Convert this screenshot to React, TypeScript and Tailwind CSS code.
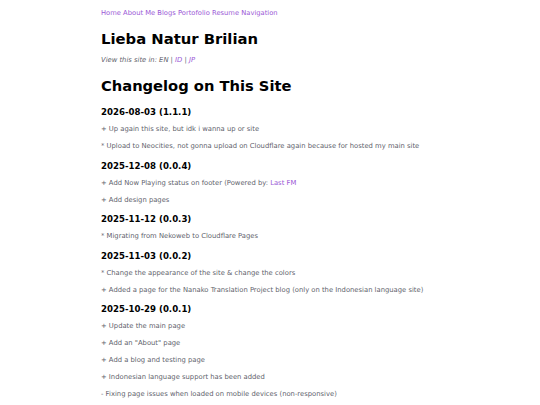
import React from 'react';

type Entry = { date: string; items: React.ReactNode[] };

const log: Entry[] = [
  {
    date: '2026-08-03 (1.1.1)',
    items: [
      '+ Up again this site, but idk i wanna up or site',
      '* Upload to Neocities, not gonna upload on Cloudflare again because for hosted my main site',
    ],
  },
  {
    date: '2025-12-08 (0.0.4)',
    items: [
      <>+ Add Now Playing status on footer (Powered by: <a className="text-[#9b59d6]">Last FM</a></>,
      '+ Add design pages',
    ],
  },
  {
    date: '2025-11-12 (0.0.3)',
    items: ['* Migrating from Nekoweb to Cloudflare Pages'],
  },
  {
    date: '2025-11-03 (0.0.2)',
    items: [
      '* Change the appearance of the site & change the colors',
      '+ Added a page for the Nanako Translation Project blog (only on the Indonesian language site)',
    ],
  },
  {
    date: '2025-10-29 (0.0.1)',
    items: [
      '+ Update the main page',
      '+ Add an "About" page',
      '+ Add a blog and testing page',
      '+ Indonesian language support has been added',
      '- Fixing page issues when loaded on mobile devices (non-responsive)',
    ],
  },
];

const nav = ['Home', 'About Me', 'Blogs', 'Portofolio', 'Resume', 'Navigation'];

export default function App() {
  return (
    <div className="min-h-screen bg-white font-['DejaVu_Sans',sans-serif] text-[#625f6c]">
      <div className="ml-[101px] pt-[8px] w-[340px]">
        <nav className="text-[6.75px] leading-[10px] text-[#9b59d6] whitespace-nowrap">
          {nav.map((n, i) => (
            <React.Fragment key={n}>
              {i > 0 && ' '}
              <a>{n}</a>
            </React.Fragment>
          ))}
        </nav>
        <h1 className="mt-[12px] text-[14.8px] leading-[18px] font-bold text-black">Lieba Natur Brilian</h1>
        <p className="mt-[7px] text-[6.8px] leading-[10px] italic">
          View this site in: EN | <a className="text-[#9b59d6]">ID</a> | <a className="text-[#9b59d6]">JP</a>
        </p>
        <h2 className="mt-[12px] text-[14.7px] leading-[18px] font-bold text-black">Changelog on This Site</h2>
        <div className="mt-[11px] flex flex-col">
          {log.map((e, k) => (
            <section key={e.date} className={k > 0 ? 'mt-[8.5px]' : ''}>
              <h3 className="text-[8.6px] leading-[12px] font-bold text-black">{e.date}</h3>
              {e.items.map((it, i) => (
                <p key={i} className={`${i === 0 ? 'mt-[6px]' : 'mt-[7px]'} text-[6.8px] leading-[10px] whitespace-nowrap`}>
                  {it}
                </p>
              ))}
            </section>
          ))}
        </div>
      </div>
    </div>
  );
}
